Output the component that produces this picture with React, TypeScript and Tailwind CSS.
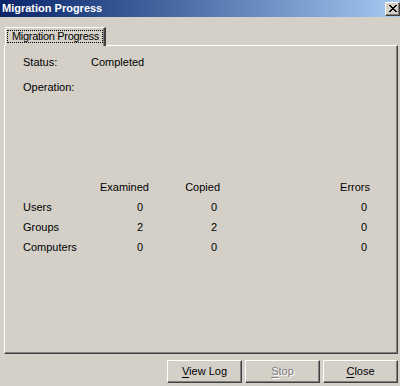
import React from 'react';

const rows = [
  { name: 'Users', examined: 0, copied: 0, errors: 0 },
  { name: 'Groups', examined: 2, copied: 2, errors: 0 },
  { name: 'Computers', examined: 0, copied: 0, errors: 0 },
];

const raised =
  'border border-t-white border-l-white border-r-[#404040] border-b-[#404040] shadow-[inset_-1px_-1px_#808080]';

const Button: React.FC<{ hot: string; rest: string; disabled?: boolean }> = ({ hot, rest, disabled }) => (
  <div
    className={`w-[75px] h-[23px] flex items-center justify-center bg-[#d4d0c8] ${raised} ${
      disabled ? 'text-[#808080] [text-shadow:1px_1px_0_#fff]' : 'text-black'
    }`}
  >
    <span>
      <span className="underline underline-offset-[2px]">{hot}</span>
      {rest}
    </span>
  </div>
);

const CloseIcon = () => (
  <svg width="8" height="7" viewBox="0 0 8 7" shapeRendering="crispEdges">
    <path d="M0 0h2v1h-2zM6 0h2v1h-2zM1 1h2v1h-2zM5 1h2v1h-2zM2 2h4v1h-4zM3 3h2v1h-2zM2 4h4v1h-4zM1 5h2v1h-2zM5 5h2v1h-2zM0 6h2v1h-2zM6 6h2v1h-2z" fill="#000" />
  </svg>
);

export default function App() {
  return (
    <div className="w-[400px] h-[386px] bg-[#d4d0c8] text-[11px] leading-[13px] text-black font-['Liberation_Sans',Arial,sans-serif] overflow-hidden flex flex-col">
      {/* title bar */}
      <div className="h-[17px] flex items-center pl-[2px] bg-gradient-to-r from-[#0a246a] to-[#a6caf0]">
        <span className="text-white font-bold text-[11px] whitespace-nowrap">Migration Progress</span>
        <div className={`ml-auto w-[15px] h-[14px] flex items-center justify-center bg-[#d4d0c8] ${raised}`}>
          <CloseIcon />
        </div>
      </div>

      <div className="pl-[4px] pr-[2px] pt-[10px]">
        {/* tab */}
        <div className="flex">
          <div className="ml-[1px] w-[101px] h-[19px] -mb-[1px] relative z-10 bg-[#d4d0c8] border-l border-t border-l-white border-t-white border-r-2 border-r-[#404040] shadow-[inset_-1px_0_#808080] rounded-tl-[2px] pl-[1px] pt-[2px]">
            <div className="w-[96px] h-[13px] border border-dotted border-black pl-[4px] leading-[11px] whitespace-nowrap tracking-[-0.3px] overflow-hidden">
              Migration Progress
            </div>
          </div>
        </div>

        {/* panel */}
        <div className={`h-[309px] ${raised} pl-[18px] pt-[10px]`}>
          <div className="flex flex-col gap-[12px]">
            <div className="flex">
              <span className="w-[68px]">Status:</span>
              <span>Completed</span>
            </div>
            <div>Operation:</div>
          </div>

          <div className="mt-[83px] flex flex-col">
            <div className="h-[20px] flex items-center">
              <span className="w-[77px]" />
              <span className="w-[46px] text-right">Examined</span>
              <span className="w-[74px] text-right">Copied</span>
              <span className="w-[150px] text-right">Errors</span>
            </div>
            {rows.map((r) => (
              <div key={r.name} className="h-[20px] flex items-center">
                <span className="w-[77px]">{r.name}</span>
                <span className="w-[46px] text-right pr-[3px]">{r.examined}</span>
                <span className="w-[74px] text-right pr-[3px]">{r.copied}</span>
                <span className="w-[150px] text-right pr-[3px]">{r.errors}</span>
              </div>
            ))}
          </div>
        </div>

        {/* buttons */}
        <div className="mt-[6px] flex justify-end gap-[3px]">
          <Button hot="V" rest="iew Log" />
          <Button hot="S" rest="top" disabled />
          <Button hot="C" rest="lose" />
        </div>
      </div>
    </div>
  );
}
